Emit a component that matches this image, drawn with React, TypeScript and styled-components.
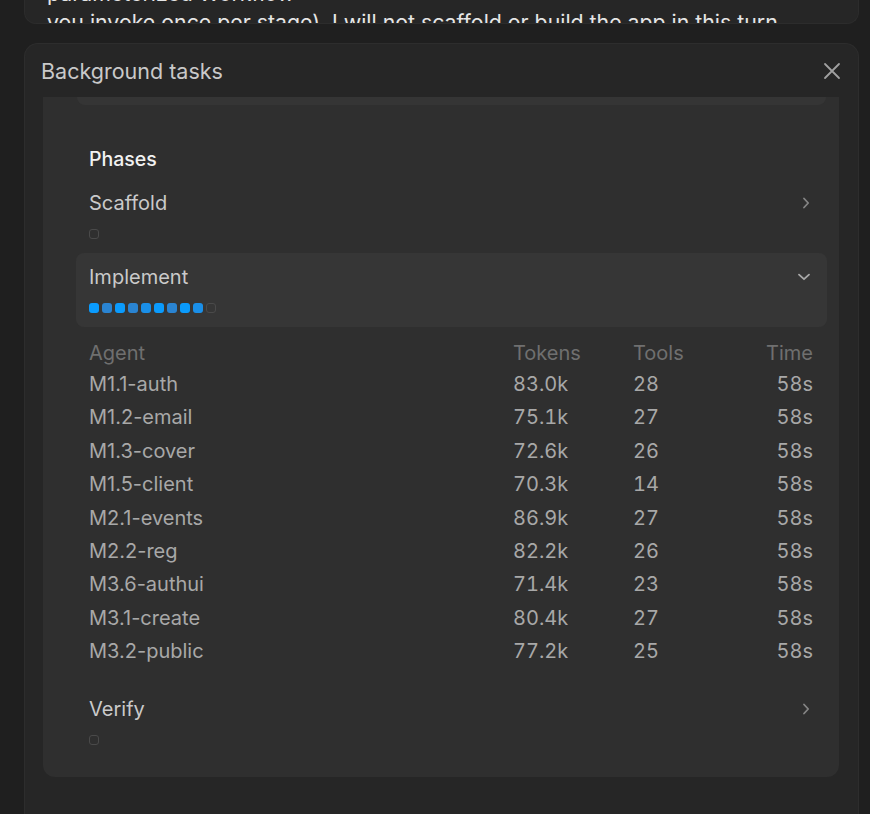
import React from "react";
import styled, { createGlobalStyle } from "styled-components";

const Global = createGlobalStyle`
  html, body { margin: 0; padding: 0; background: #1f1f1f; }
  body { font-family: Inter, "Noto Sans", "Liberation Sans", sans-serif; -webkit-font-smoothing: antialiased; }
  * { box-sizing: border-box; }
`;

const Page = styled.div`
  width: 870px;
  height: 814px;
  overflow: hidden;
  padding: 0 11px 0 24px;
  display: flex;
  flex-direction: column;
`;

const MessageCard = styled.div`
  height: 24px;
  overflow: hidden;
  background: #262626;
  border: 1px solid #2c2c2c;
  border-top: none;
  border-radius: 0 0 12px 12px;
  padding: 0 22px;
  flex-shrink: 0;
`;

const MessageText = styled.div`
  margin-top: -21px;
  font-size: 21.3px;
  line-height: 29px;
  color: #e6e6e6;
  white-space: nowrap;
`;

const Modal = styled.div`
  margin-top: 19px;
  flex: 1;
  background: #262626;
  border: 1px solid #2d2d2d;
  border-bottom: none;
  border-radius: 14px 14px 0 0;
  display: flex;
  flex-direction: column;
  padding: 0 19px 0 18px;
`;

const Header = styled.div`
  height: 53px;
  display: flex;
  align-items: center;
  justify-content: space-between;
  margin: 0 -2px 0 -2px;
`;

const Title = styled.div`
  font-size: 21.5px;
  color: #c9c9c9;
`;

const CloseButton = styled.button`
  background: none;
  border: none;
  padding: 0;
  width: 18px;
  height: 18px;
  display: flex;
  align-items: center;
  justify-content: center;
  color: #a0a0a0;
`;

const Panel = styled.div`
  background: #2f2f2f;
  border-radius: 0 0 12px 12px;
  padding: 0 12px 18px 33px;
  display: flex;
  flex-direction: column;
`;

const ScrolledCardEdge = styled.div`
  height: 8px;
  background: #353535;
  border-radius: 0 0 10px 10px;
  margin: 0 1px 0 1px;
`;

const SectionTitle = styled.div`
  margin-top: 42px;
  padding: 0 13px;
  font-size: 19.5px;
  line-height: 24px;
  font-weight: 500;
  color: #f2f2f2;
  margin-bottom: 8px;
`;

const PhaseRow = styled.div<{ $active?: boolean }>`
  background: ${(p) => (p.$active ? "#363636" : "transparent")};
  border-radius: 8px;
  padding: 12px 17px 14px 13px;
  display: flex;
  flex-direction: column;
`;

const PhaseHead = styled.div`
  display: flex;
  align-items: center;
  justify-content: space-between;
  height: 24px;
`;

const PhaseName = styled.div`
  font-size: 20px;
  line-height: 24px;
  color: #cacaca;
`;

const Dots = styled.div`
  margin-top: 14px;
  display: flex;
  gap: 3px;
  height: 10px;
`;

const Dot = styled.span<{ $tone: "bright" | "dark" | "mid" | "empty" }>`
  width: 10px;
  height: 10px;
  border-radius: 3px;
  background: ${(p) =>
    p.$tone === "bright"
      ? "#0a9bfd"
      : p.$tone === "dark"
      ? "#2a84d2"
      : p.$tone === "mid"
      ? "#1a8fe8"
      : "transparent"};
  border: ${(p) => (p.$tone === "empty" ? "1px solid #4a4a4a" : "none")};
`;

const Table = styled.div`
  margin-top: 11px;
  padding: 0 14px 0 13px;
  display: grid;
  grid-template-columns: 1fr 120px 100px 80px;
`;

const HeadCell = styled.div<{ $right?: boolean }>`
  height: 30px;
  line-height: 30px;
  font-size: 20px;
  color: #6f6f6f;
  text-align: ${(p) => (p.$right ? "right" : "left")};
`;

const Cell = styled.div<{ $right?: boolean; $num?: boolean }>`
  height: 33.4px;
  line-height: 33.4px;
  font-size: 20px;
  color: #a8a8a8;
  text-align: ${(p) => (p.$right ? "right" : "left")};
  font-feature-settings: ${(p) => (p.$num ? '"tnum"' : "normal")};
`;

const VerifyWrap = styled.div`
  margin-top: 16px;
`;

const ChevronRight = () => (
  <svg width="8" height="12" viewBox="0 0 8 12" fill="none">
    <path d="M2 1.5 L6.2 6 L2 10.5" stroke="#858585" strokeWidth="1.8" strokeLinecap="round" strokeLinejoin="round" />
  </svg>
);

const ChevronDown = () => (
  <svg width="12" height="8" viewBox="0 0 12 8" fill="none">
    <path d="M1 1.6 L6 6.2 L11 1.6" stroke="#a8a8a8" strokeWidth="1.8" strokeLinecap="round" strokeLinejoin="round" />
  </svg>
);

const CloseIcon = () => (
  <svg width="18" height="18" viewBox="0 0 18 18" fill="none">
    <path d="M2 2 L16 16 M16 2 L2 16" stroke="#a0a0a0" strokeWidth="1.8" strokeLinecap="round" />
  </svg>
);

const rows = [
  ["M1.1-auth", "83.0k", "28", "58s"],
  ["M1.2-email", "75.1k", "27", "58s"],
  ["M1.3-cover", "72.6k", "26", "58s"],
  ["M1.5-client", "70.3k", "14", "58s"],
  ["M2.1-events", "86.9k", "27", "58s"],
  ["M2.2-reg", "82.2k", "26", "58s"],
  ["M3.6-authui", "71.4k", "23", "58s"],
  ["M3.1-create", "80.4k", "27", "58s"],
  ["M3.2-public", "77.2k", "25", "58s"],
];

const implementDots: Array<"bright" | "dark" | "mid" | "empty"> = [
  "bright", "dark", "bright", "dark", "mid", "bright", "dark", "bright", "mid", "empty",
];

export default function App() {
  return (
    <>
      <Global />
      <Page>
        <MessageCard>
          <MessageText>
            parameterized Workflow
            <br />
            you invoke once per stage). I will not scaffold or build the app in this turn
          </MessageText>
        </MessageCard>
        <Modal>
          <Header>
            <Title>Background tasks</Title>
            <CloseButton aria-label="Close">
              <CloseIcon />
            </CloseButton>
          </Header>
          <Panel>
            <ScrolledCardEdge />
            <SectionTitle>Phases</SectionTitle>
            <PhaseRow>
              <PhaseHead>
                <PhaseName>Scaffold</PhaseName>
                <ChevronRight />
              </PhaseHead>
              <Dots>
                <Dot $tone="empty" />
              </Dots>
            </PhaseRow>
            <PhaseRow $active>
              <PhaseHead>
                <PhaseName>Implement</PhaseName>
                <ChevronDown />
              </PhaseHead>
              <Dots>
                {implementDots.map((t, i) => (
                  <Dot key={i} $tone={t} />
                ))}
              </Dots>
            </PhaseRow>
            <Table>
              <HeadCell>Agent</HeadCell>
              <HeadCell>Tokens</HeadCell>
              <HeadCell>Tools</HeadCell>
              <HeadCell $right>Time</HeadCell>
              {rows.map((r) => (
                <React.Fragment key={r[0]}>
                  <Cell>{r[0]}</Cell>
                  <Cell $num>{r[1]}</Cell>
                  <Cell $num>{r[2]}</Cell>
                  <Cell $num $right>{r[3]}</Cell>
                </React.Fragment>
              ))}
            </Table>
            <VerifyWrap>
              <PhaseRow>
                <PhaseHead>
                  <PhaseName>Verify</PhaseName>
                  <ChevronRight />
                </PhaseHead>
                <Dots>
                  <Dot $tone="empty" />
                </Dots>
              </PhaseRow>
            </VerifyWrap>
          </Panel>
        </Modal>
      </Page>
    </>
  );
}
